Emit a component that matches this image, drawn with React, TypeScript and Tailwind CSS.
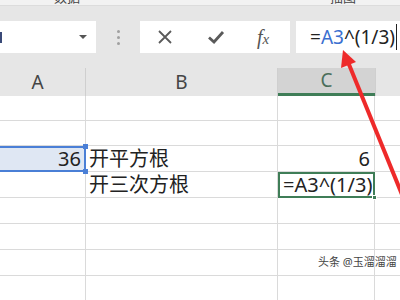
import React from "react";

const font = { fontFamily: '"Noto Sans", "Noto Sans CJK SC", sans-serif' };

function Row({ h, children }: { h: string; children?: React.ReactNode }) {
  return <div className={`flex ${h}`}>{children}</div>;
}

export default function App() {
  const rowsAfter = ["h-[26px]", "h-[26px]", "h-[26px]", "h-[26px]"];
  return (
    <div className="relative w-[400px] h-[300px] overflow-hidden bg-white" style={font}>
      {/* top strip */}
      <div className="h-[6px] bg-[#f2f2f2] overflow-hidden flex text-[13px] leading-[13px] text-[#444] border-b border-[#dcdcdc]">
        <span className="ml-[54px] mt-[-9px]">数据</span>
        <span className="ml-[250px] mt-[-9px]">插图</span>
      </div>
      {/* toolbar */}
      <div className="h-[62px] bg-[#e6e6e6] pt-[15px]">
        <div className="flex h-[32px]">
          <div className="w-[96px] bg-white flex items-center">
            <div className="w-[2px] h-[11px] bg-[#3a4a78]" />
            <div className="ml-auto mr-[9px] w-0 h-0 border-l-[4px] border-r-[4px] border-t-[4px] border-l-transparent border-r-transparent border-t-[#555]" />
          </div>
          <div className="w-[44px] flex flex-col items-center justify-center gap-[3px]">
            <div className="w-[3px] h-[3px] rounded-full bg-[#a0a0a0]" />
            <div className="w-[3px] h-[3px] rounded-full bg-[#a0a0a0]" />
            <div className="w-[3px] h-[3px] rounded-full bg-[#a0a0a0]" />
          </div>
          <div className="w-[150px] bg-white flex items-center">
            <svg className="ml-[17px]" width="16" height="16" viewBox="0 0 16 16">
              <path d="M2 2 L14 14 M14 2 L2 14" stroke="#5a5a5a" strokeWidth="1.8" />
            </svg>
            <svg className="ml-[34px]" width="18" height="16" viewBox="0 0 18 16">
              <path d="M2 8.5 L7 13 L16 3" stroke="#5a5a5a" strokeWidth="2.8" fill="none" />
            </svg>
            <span
              className="ml-[32px] text-[20px] italic text-[#555]"
              style={{ fontFamily: '"Liberation Serif", serif' }}
            >
              f<span className="text-[15px]">x</span>
            </span>
          </div>
          <div className="w-[6px]" />
          <div className="flex-1 bg-white flex items-center pl-[14px] text-[19px] text-[#222]">
            <span>=</span>
            <span className="text-[#3a6fd0]">A3</span>
            <span>^(1/3)</span>
            <div className="ml-[1px] w-[1.5px] h-[26px] bg-[#222]" />
          </div>
        </div>
      </div>
      {/* header row */}
      <div className="flex h-[28px] bg-[#e6e6e6] text-[19px] text-[#444]">
        <div className="w-[86px] border-r border-[#cfcfcf] flex items-center justify-center pr-[10px]">A</div>
        <div className="w-[192px] border-r border-[#cfcfcf] flex items-center justify-center">B</div>
        <div className="w-[97px] bg-[#d3d3d3] border-b-[3px] border-[#3f7d57] flex items-center justify-center text-[#4a6e5a]">
          C
        </div>
        <div className="flex-1 border-l border-[#cfcfcf]" />
      </div>
      {/* body */}
      <div className="text-[20px] leading-none text-[#222]">
        <Row h="h-[25px]">
          <div className="w-[86px] border-r border-b border-[#dadada]" />
          <div className="w-[192px] border-r border-b border-[#dadada]" />
          <div className="w-[97px] border-r border-b border-[#dadada]" />
          <div className="flex-1 border-b border-[#dadada]" />
        </Row>
        <Row h="h-[25px]">
          <div className="w-[86px] border-r border-b border-[#dadada]" />
          <div className="w-[192px] border-r border-b border-[#dadada]" />
          <div className="w-[97px] border-r border-b border-[#dadada]" />
          <div className="flex-1 border-b border-[#dadada]" />
        </Row>
        <Row h="h-[26px]">
          <div className="relative w-[86px] bg-[#dfe7f3] border-y-2 border-r-2 border-[#4a7fd6] flex items-center justify-end pr-[3px]">
            36
            <div className="absolute right-[-4px] top-[-4px] w-[5px] h-[5px] bg-[#4a7fd6]" />
            <div className="absolute right-[-4px] bottom-[-4px] w-[5px] h-[5px] bg-[#4a7fd6]" />
          </div>
          <div className="w-[192px] border-r border-b border-[#dadada] flex items-center pl-[3px]">开平方根</div>
          <div className="w-[97px] border-r border-b border-[#dadada] flex items-center justify-end pr-[4px]">6</div>
          <div className="flex-1 border-b border-[#dadada]" />
        </Row>
        <Row h="h-[26px]">
          <div className="w-[86px] border-r border-b border-[#dadada]" />
          <div className="w-[192px] border-r border-b border-[#dadada] flex items-center pl-[3px]">开三次方根</div>
          <div className="relative w-[97px] border-2 border-[#3f7d57] flex items-center pl-[3px]">
            =A3^(1/3)
            <div className="absolute right-[-4px] bottom-[-4px] w-[5px] h-[5px] bg-[#3f7d57] border border-white" />
          </div>
          <div className="flex-1 border-b border-[#dadada]" />
        </Row>
        {rowsAfter.map((h, i) => (
          <Row key={i} h={h}>
            <div className="w-[86px] border-r border-b border-[#dadada]" />
            <div className="w-[192px] border-r border-b border-[#dadada]" />
            <div className="w-[97px] border-r border-b border-[#dadada]" />
            <div className="flex-1 border-b border-[#dadada]" />
          </Row>
        ))}
      </div>
      {/* watermark */}
      <div
        className="absolute left-[318px] top-[255px] whitespace-nowrap text-[11px] leading-[14px] text-[#444]"
        style={{ textShadow: "0 0 2px #fff" }}
      >
        头条 @玉溜溜溜
      </div>
      {/* red arrow */}
      <svg className="absolute left-0 top-0" width="400" height="300" viewBox="0 0 400 300">
        <line x1="348" y1="62" x2="445" y2="300" stroke="#ee2a2a" strokeWidth="4" />
        <polygon points="343,50 356,62 341,68" fill="#ee2a2a" />
      </svg>
    </div>
  );
}
